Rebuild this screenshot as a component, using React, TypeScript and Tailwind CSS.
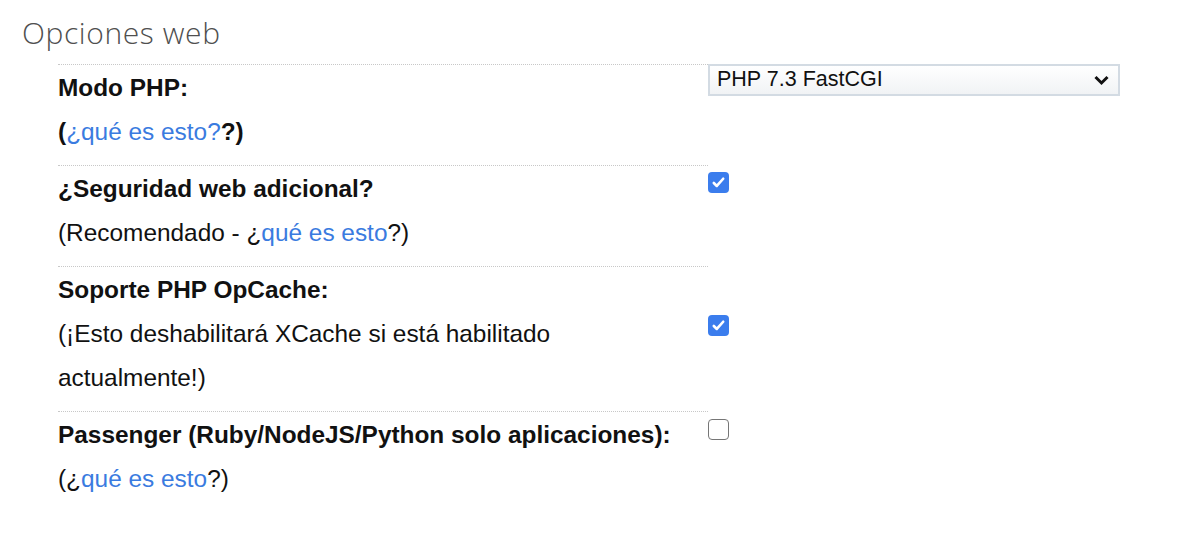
import React from 'react';

const LINK = 'text-[#3a7be0]';

const CheckBox: React.FC<{ checked?: boolean }> = ({ checked }) =>
    checked ? (
        <span className="flex h-[21px] w-[21px] items-center justify-center rounded-[4px] bg-[#3b7ded]">
            <svg width="15" height="15" viewBox="0 0 16 16">
                <path d="M3 8.5l3.2 3.2L13 4" fill="none" stroke="#fff" strokeWidth="2.8" strokeLinecap="round" strokeLinejoin="round" />
            </svg>
        </span>
    ) : (
        <span className="block h-[21px] w-[21px] rounded-[4px] border-[1.5px] border-[#767676] bg-white" />
    );

const Row: React.FC<{ children: React.ReactNode; right?: React.ReactNode; rightOffset: string }> = ({
    children,
    right,
    rightOffset,
}) => (
    <div className="flex">
        <div className="w-[650px] border-t border-dotted border-[#c8c8c8] pt-[1px] pb-[11px]">{children}</div>
        <div className={`flex-1 ${rightOffset}`}>{right}</div>
    </div>
);

export default function App() {
    return (
        <div className="h-[540px] w-[1190px] bg-white pl-[22px] pt-[13px] text-[#111]" style={{ fontFamily: '"Liberation Sans", Arial, sans-serif' }}>
            <h1 className="text-[30px] font-light leading-[40px] tracking-[0.6px] text-[#4f4f4f]" style={{ fontFamily: '"Open Sans", sans-serif' }}>
                Opciones web
            </h1>
            <div className="ml-[36px] mt-[11px] w-[1062px] text-[24.4px] leading-[44px]">
                <Row
                    rightOffset="pt-0"
                    right={
                        <div className="flex h-[32px] w-[412px] items-center justify-between border-2 border-[#d3dbe3] bg-gradient-to-b from-white to-[#f1f3f5] pl-[7px] pr-[8px] text-[21.5px] leading-none">
                            <span>PHP 7.3 FastCGI</span>
                            <svg width="17" height="12" viewBox="0 0 16 12">
                                <path d="M2 3l6 6 6-6" fill="none" stroke="#111" strokeWidth="3" />
                            </svg>
                        </div>
                    }
                >
                    <div className="font-bold">Modo PHP:</div>
                    <div className="font-bold">
                        (<span className={`${LINK} font-normal`}>¿qué es esto?</span>?)
                    </div>
                </Row>
                <Row rightOffset="pt-[7px]" right={<CheckBox checked />}>
                    <div className="font-bold">¿Seguridad web adicional?</div>
                    <div>
                        (Recomendado - ¿<span className={LINK}>qué es esto</span>?)
                    </div>
                </Row>
                <Row rightOffset="pt-[49px]" right={<CheckBox checked />}>
                    <div className="font-bold">Soporte PHP OpCache:</div>
                    <div className="w-[600px]">(¡Esto deshabilitará XCache si está habilitado actualmente!)</div>
                </Row>
                <Row rightOffset="pt-[8px]" right={<CheckBox />}>
                    <div className="font-bold">Passenger (Ruby/NodeJS/Python solo aplicaciones):</div>
                    <div>
                        (¿<span className={LINK}>qué es esto</span>?)
                    </div>
                </Row>
            </div>
        </div>
    );
}
